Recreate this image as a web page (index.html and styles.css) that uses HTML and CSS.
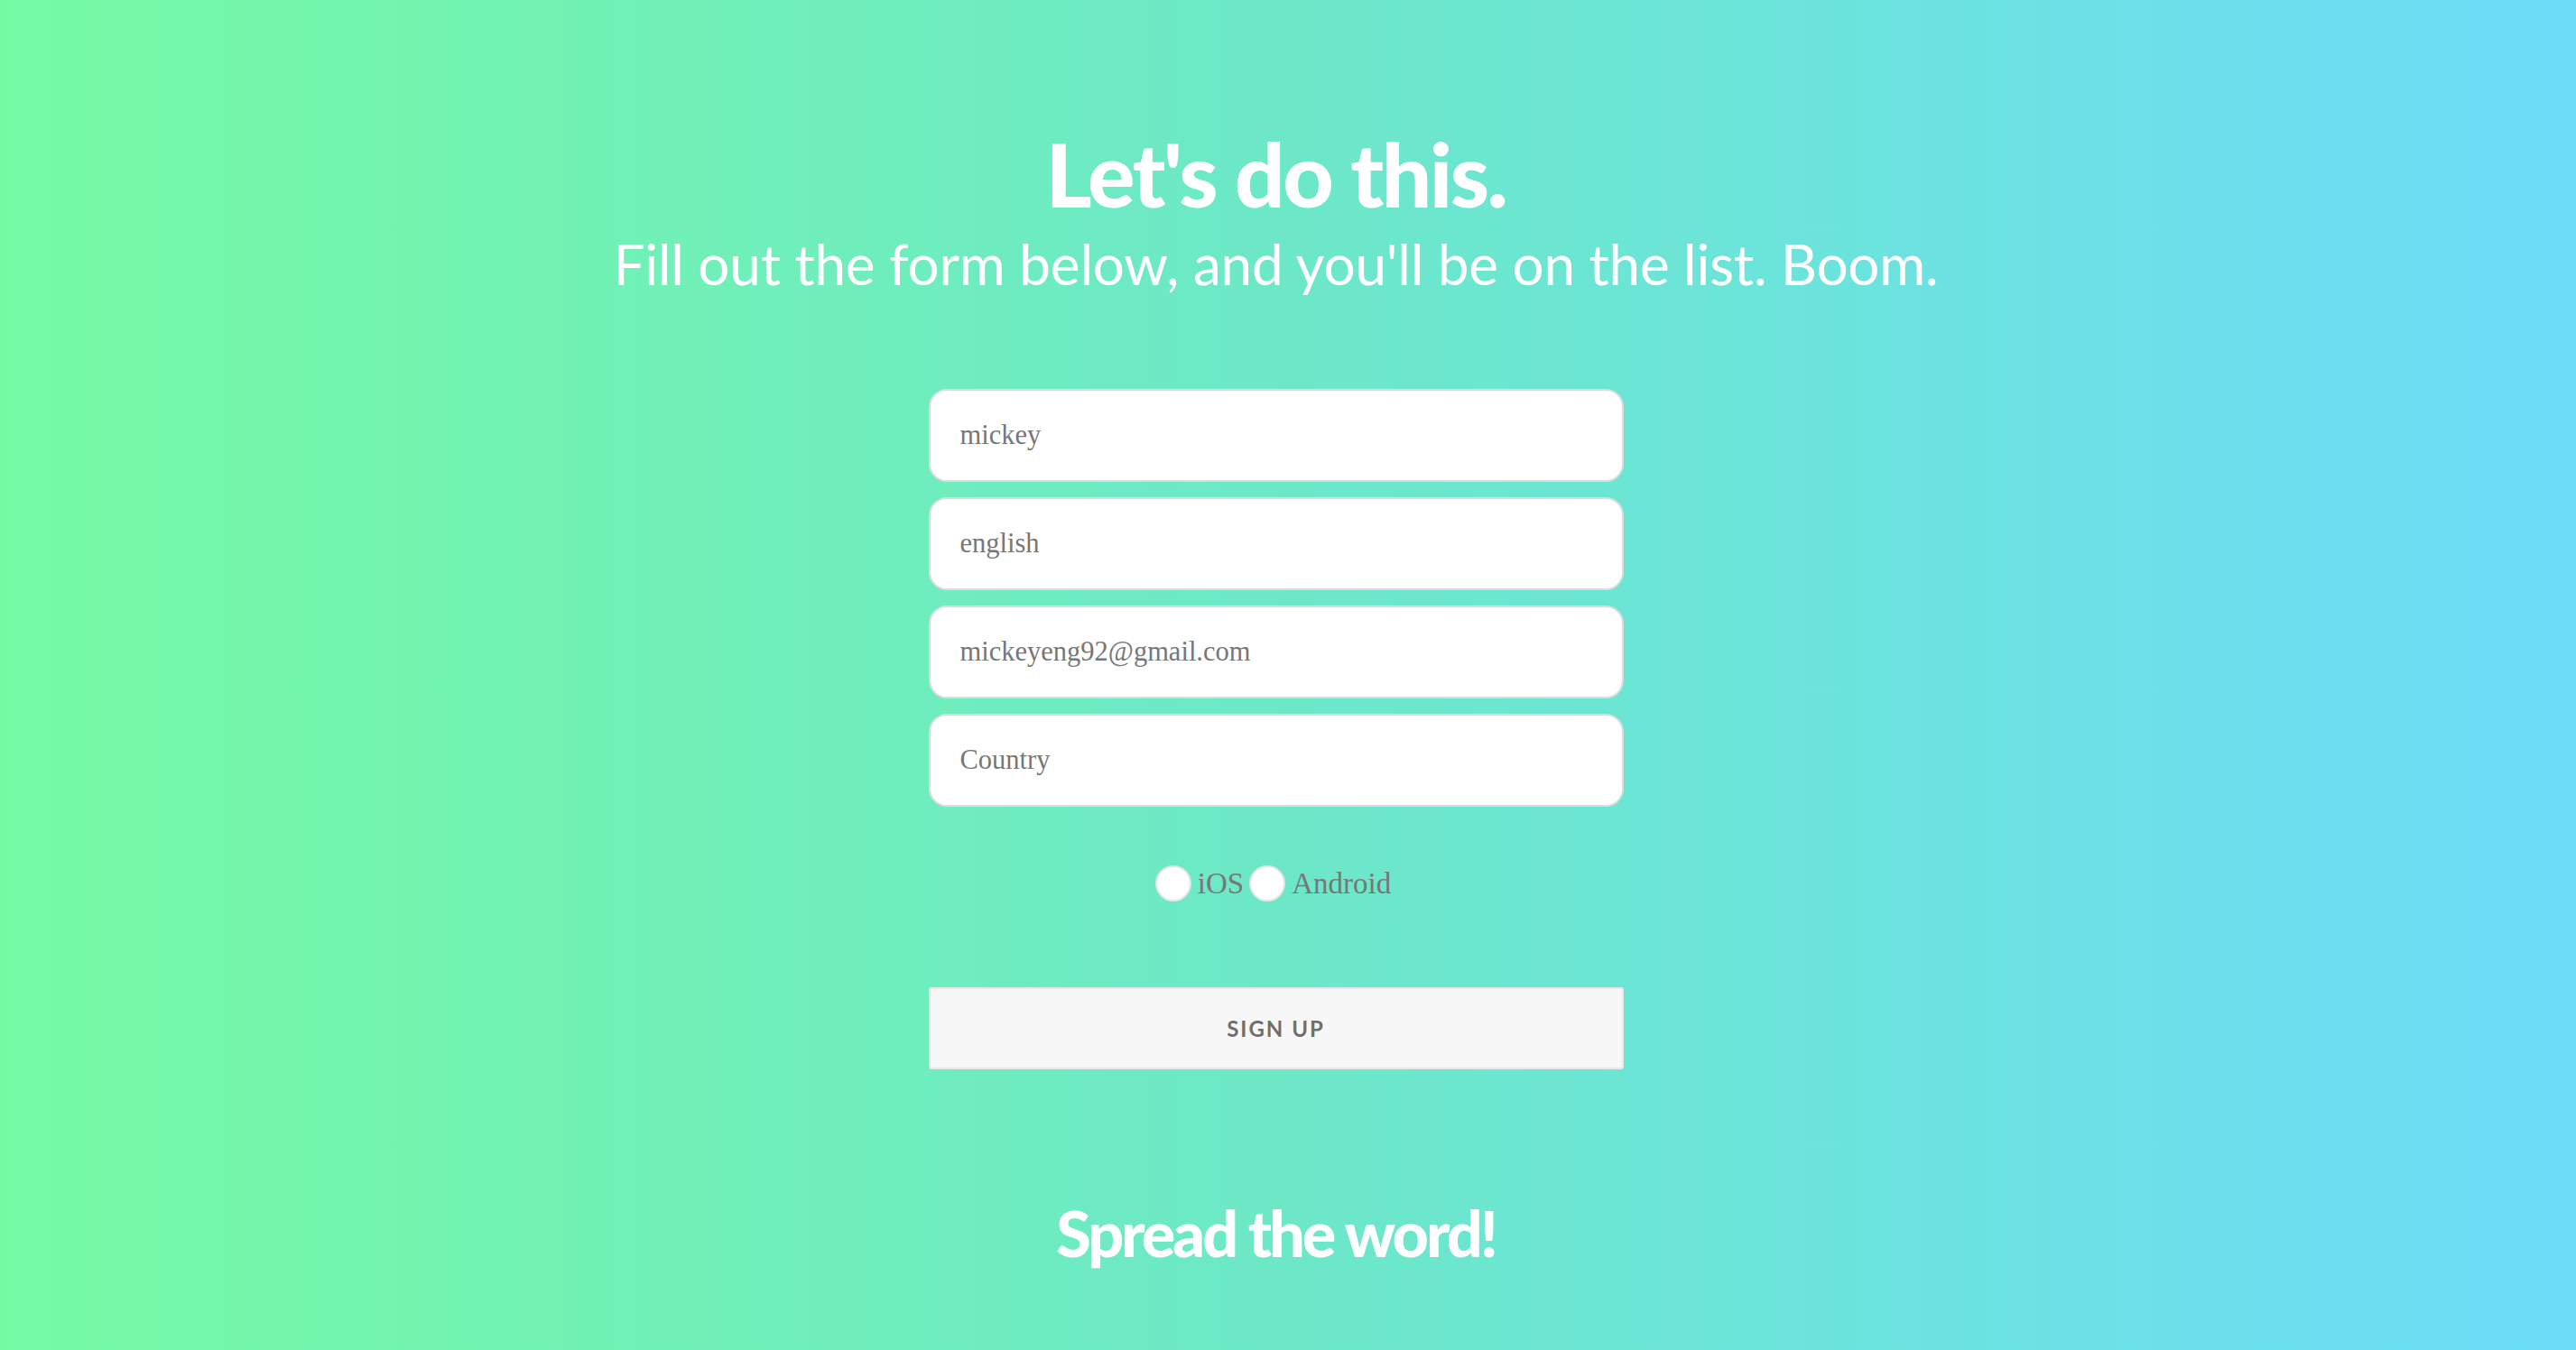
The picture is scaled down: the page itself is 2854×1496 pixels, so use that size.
FILE: index.html
```html
<!DOCTYPE html>
<html lang="en">
<head>
<meta charset="utf-8">
<title>Let's do this.</title>
<link rel="stylesheet" href="styles.css">
</head>
<body>
<main class="page">
  <header class="intro">
    <h1 class="title">Let's do this.</h1>
    <p class="subtitle">Fill out the form below, and you'll be on the list. Boom.</p>
  </header>
  <form class="signup">
    <div class="fields">
      <input class="field" type="text" value="mickey">
      <input class="field" type="text" value="english">
      <input class="field" type="email" value="mickeyeng92@gmail.com">
      <input class="field" type="text" placeholder="Country">
    </div>
    <div class="platforms">
      <label class="platform"><input class="radio" type="radio" name="os"><span>iOS</span></label>
      <label class="platform"><input class="radio" type="radio" name="os"><span>Android</span></label>
    </div>
    <button class="submit" type="button">SIGN UP</button>
  </form>
  <h2 class="spread">Spread the word!</h2>
</main>
</body>
</html>
```
FILE: styles.css
```css
html, body {
  margin: 0;
  padding: 0;
}
body {
  min-height: 100vh;
  background: linear-gradient(to right, #75faa4 0%, #6ce8c8 50%, #6bddf9 100%);
  font-family: "Lato", "Liberation Sans", sans-serif;
  color: #fff;
  overflow: hidden;
}
.page {
  display: flex;
  flex-direction: column;
  align-items: center;
  padding: 137px 27px 0 0;
}
.intro {
  display: flex;
  flex-direction: column;
  align-items: center;
}
.title {
  margin: 0;
  font-family: "Lato", sans-serif;
  font-weight: 900;
  font-size: 98px;
  line-height: 110px;
  letter-spacing: -2.5px;
}
.subtitle {
  margin: 5px 0 0;
  font-family: "Lato", sans-serif;
  font-weight: 400;
  font-size: 62px;
  line-height: 80px;
  letter-spacing: -0.2px;
}
.signup {
  display: flex;
  flex-direction: column;
  align-items: center;
  margin-top: 99px;
  width: 770px;
}
.fields {
  display: flex;
  flex-direction: column;
  gap: 17px;
  width: 100%;
}
.field {
  box-sizing: border-box;
  width: 100%;
  height: 103px;
  padding: 0 33px;
  border: 2px solid #dcdcdc;
  border-radius: 20px;
  background: #fff;
  font-family: "Liberation Serif", serif;
  font-size: 30.5px;
  color: #777;
  outline: none;
}
.field::placeholder {
  color: #777;
  opacity: 1;
}
.platforms {
  display: flex;
  align-items: center;
  gap: 6px;
  margin-top: 65px;
  margin-left: -6px;
}
.platform {
  display: flex;
  align-items: center;
  gap: 7px;
  font-family: "Liberation Serif", serif;
  font-size: 33px;
  color: #777;
}
.radio {
  appearance: none;
  -webkit-appearance: none;
  box-sizing: border-box;
  width: 40px;
  height: 40px;
  margin: 0;
  border: 2px solid #e4e4e4;
  border-radius: 50%;
  background: #fff;
}
.submit {
  box-sizing: border-box;
  width: 100%;
  height: 91px;
  margin-top: 95px;
  border: 2px solid #e8e8e8;
  border-radius: 3px;
  background: #f7f7f7;
  font-family: "Lato", sans-serif;
  font-weight: 700;
  font-size: 24px;
  letter-spacing: 2px;
  color: #6f6f6f;
}
.spread {
  margin: 141px 0 0;
  font-family: "Lato", sans-serif;
  font-weight: 900;
  font-size: 70px;
  line-height: 80px;
  letter-spacing: -3px;
}
```
